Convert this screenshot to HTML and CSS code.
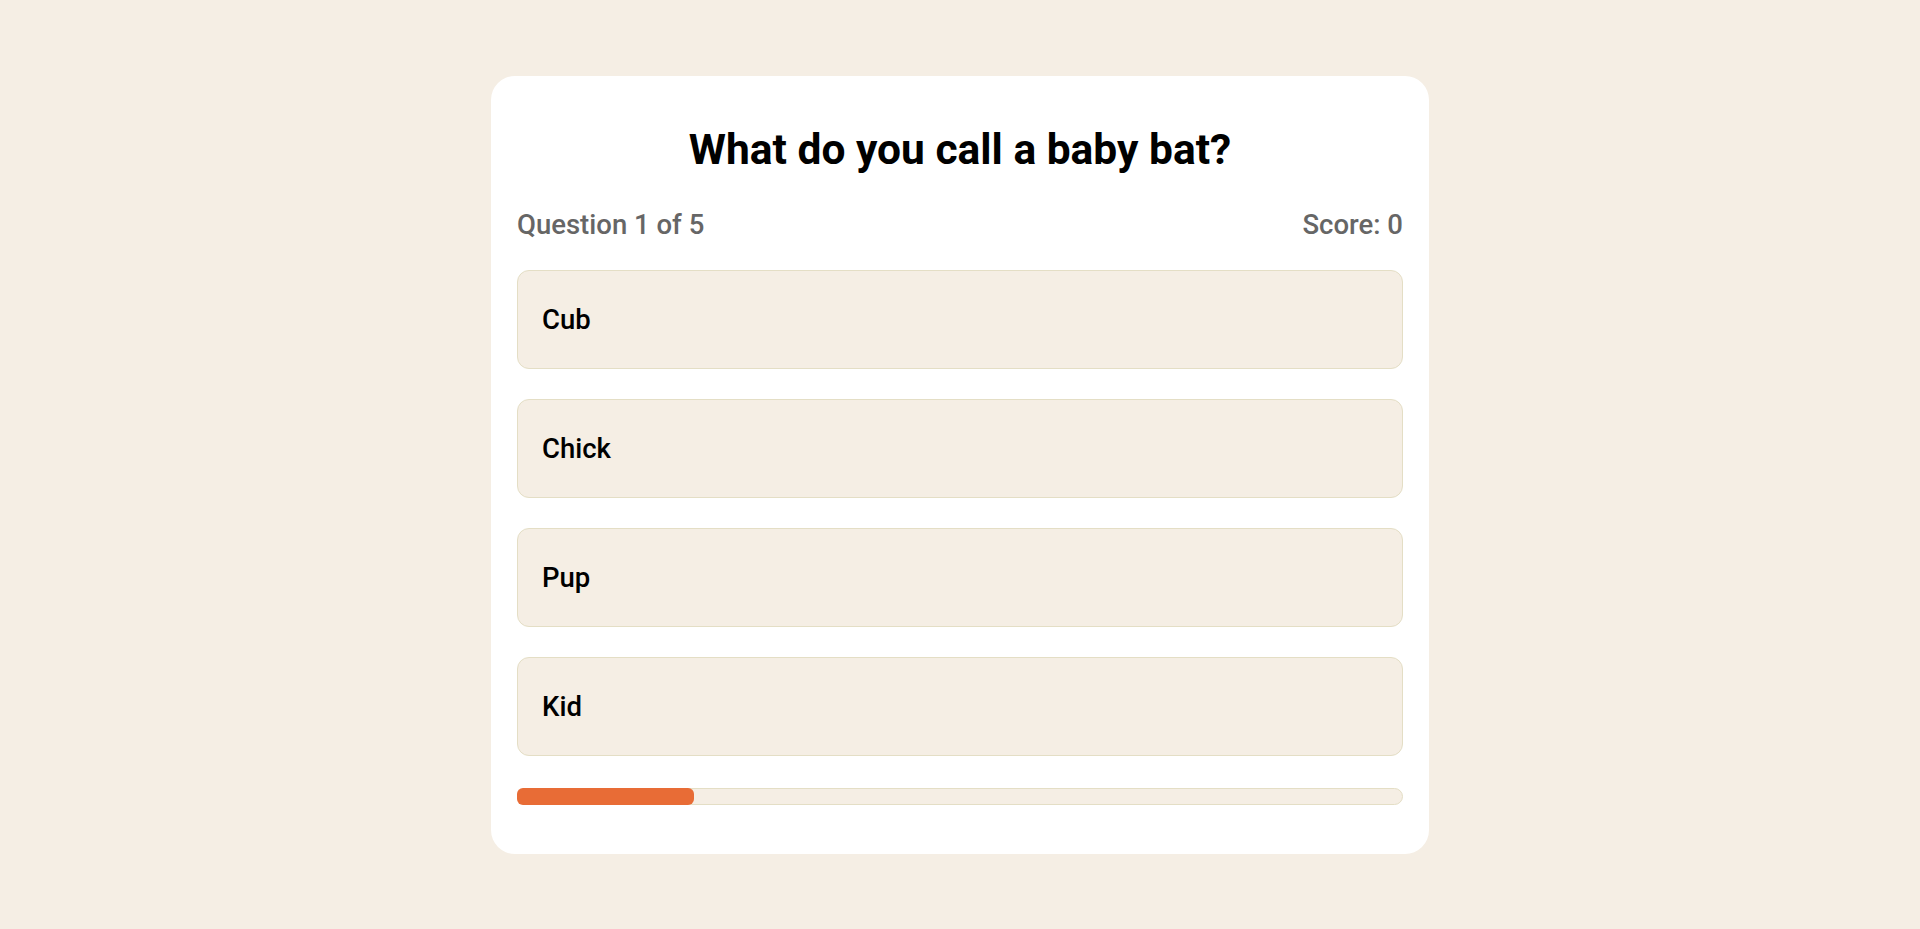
FILE: index.html
```html
<!DOCTYPE html>
<html lang="en">
<head>
<meta charset="utf-8">
<title>Quiz</title>
<link rel="stylesheet" href="styles.css">
</head>
<body>
<main class="page">
  <section class="card">
    <h1 class="question">What do you call a baby bat?</h1>
    <div class="meta">
      <span class="meta-item">Question 1 of 5</span>
      <span class="meta-item">Score: 0</span>
    </div>
    <div class="options">
      <button class="option">Cub</button>
      <button class="option">Chick</button>
      <button class="option">Pup</button>
      <button class="option">Kid</button>
    </div>
    <div class="progress">
      <div class="progress-fill" style="width: 20%"></div>
    </div>
  </section>
</main>
</body>
</html>
```

FILE: styles.css
```css
* { box-sizing: border-box; }

html, body {
  margin: 0;
  padding: 0;
}

body {
  background: #f5eee4;
  font-family: Roboto, "Noto Sans", Arial, sans-serif;
  color: #000;
}

.page {
  min-height: 100vh;
  display: flex;
  align-items: center;
  justify-content: center;
}

.card {
  width: 938px;
  background: #ffffff;
  border-radius: 24px;
  padding: 49px 26px 49px;
}

.question {
  margin: 0;
  text-align: center;
  font-size: 42.5px;
  font-weight: 700;
  line-height: 50px;
}

.meta {
  display: flex;
  justify-content: space-between;
  margin-top: 34px;
  font-size: 27.5px;
  font-weight: 500;
  line-height: 32px;
  color: #666666;
}

.options {
  display: flex;
  flex-direction: column;
  gap: 30px;
  margin-top: 29px;
}

.option {
  display: block;
  width: 100%;
  height: 99px;
  text-align: left;
  font-family: inherit;
  font-size: 27.5px;
  font-weight: 500;
  line-height: 28px;
  color: #000;
  background: #f5eee4;
  border: 1px solid #e4dec5;
  border-radius: 12px;
  padding: 35px 24px 34px;
  cursor: pointer;
}

.progress {
  margin-top: 32px;
  height: 17px;
  background: #f5eee4;
  border: 1px solid #e4dec5;
  border-radius: 9px;
  position: relative;
}

.progress-fill {
  position: absolute;
  left: -1px;
  top: -1px;
  bottom: -1px;
  background: #e86c36;
  border-radius: 6px;
}
```
